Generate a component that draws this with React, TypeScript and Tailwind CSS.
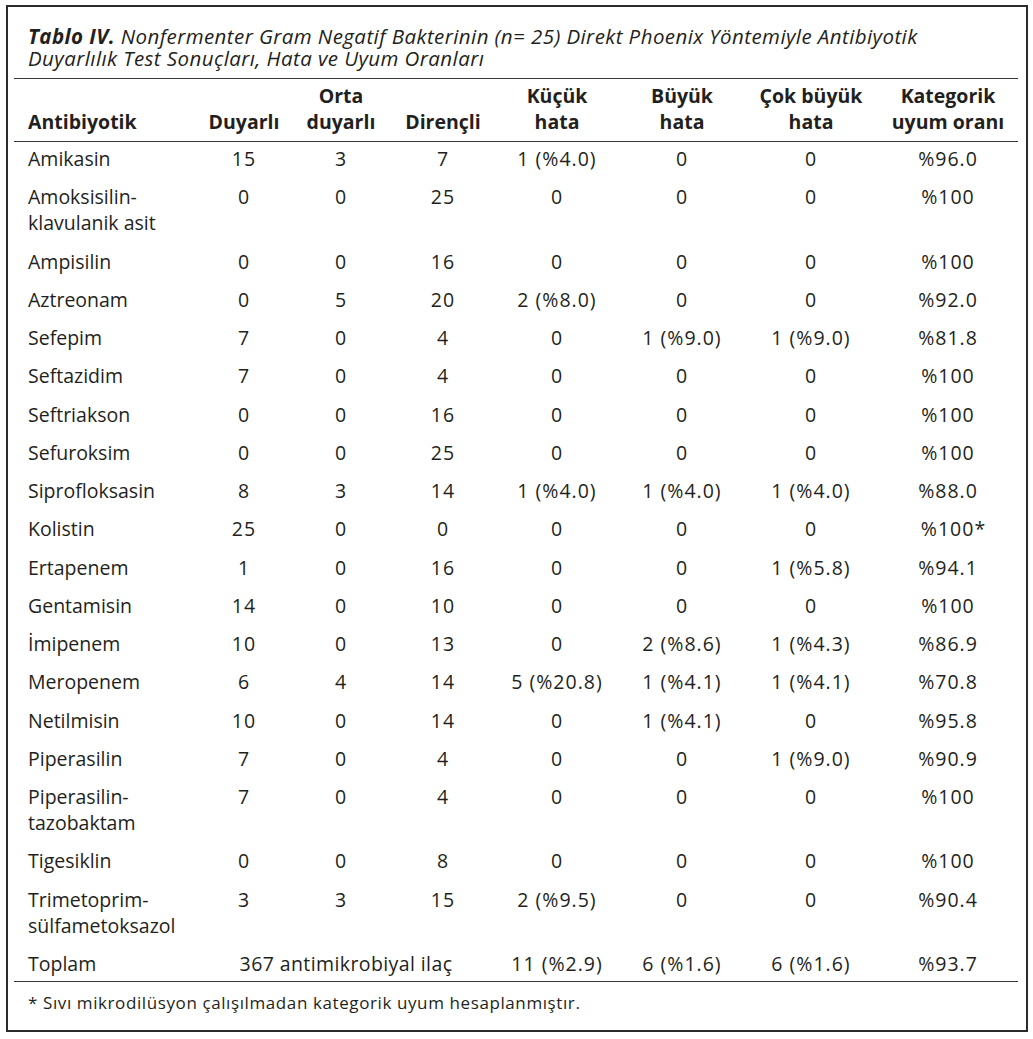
import React from "react";

type Row = {
  name: string[];
  v: string[];
  star?: boolean;
};

const rows: Row[] = [
  { name: ["Amikasin"], v: ["15", "3", "7", "1 (%4.0)", "0", "0", "%96.0"] },
  { name: ["Amoksisilin-", "klavulanik asit"], v: ["0", "0", "25", "0", "0", "0", "%100"] },
  { name: ["Ampisilin"], v: ["0", "0", "16", "0", "0", "0", "%100"] },
  { name: ["Aztreonam"], v: ["0", "5", "20", "2 (%8.0)", "0", "0", "%92.0"] },
  { name: ["Sefepim"], v: ["7", "0", "4", "0", "1 (%9.0)", "1 (%9.0)", "%81.8"] },
  { name: ["Seftazidim"], v: ["7", "0", "4", "0", "0", "0", "%100"] },
  { name: ["Seftriakson"], v: ["0", "0", "16", "0", "0", "0", "%100"] },
  { name: ["Sefuroksim"], v: ["0", "0", "25", "0", "0", "0", "%100"] },
  { name: ["Siprofloksasin"], v: ["8", "3", "14", "1 (%4.0)", "1 (%4.0)", "1 (%4.0)", "%88.0"] },
  { name: ["Kolistin"], v: ["25", "0", "0", "0", "0", "0", "%100"], star: true },
  { name: ["Ertapenem"], v: ["1", "0", "16", "0", "0", "1 (%5.8)", "%94.1"] },
  { name: ["Gentamisin"], v: ["14", "0", "10", "0", "0", "0", "%100"] },
  { name: ["İmipenem"], v: ["10", "0", "13", "0", "2 (%8.6)", "1 (%4.3)", "%86.9"] },
  { name: ["Meropenem"], v: ["6", "4", "14", "5 (%20.8)", "1 (%4.1)", "1 (%4.1)", "%70.8"] },
  { name: ["Netilmisin"], v: ["10", "0", "14", "0", "1 (%4.1)", "0", "%95.8"] },
  { name: ["Piperasilin"], v: ["7", "0", "4", "0", "0", "1 (%9.0)", "%90.9"] },
  { name: ["Piperasilin-", "tazobaktam"], v: ["7", "0", "4", "0", "0", "0", "%100"] },
  { name: ["Tigesiklin"], v: ["0", "0", "8", "0", "0", "0", "%100"] },
  { name: ["Trimetoprim-", "sülfametoksazol"], v: ["3", "3", "15", "2 (%9.5)", "0", "0", "%90.4"] },
];

const grid =
  "grid grid-cols-[186px_88px_106px_98px_130px_120px_138px_136px]";

export default function App() {
  return (
    <div
      className="min-h-screen bg-white pt-[5px] pl-[6px] text-[#231f20]"
      style={{ fontFamily: '"Open Sans", "Noto Sans", sans-serif' }}
    >
      <div className="w-[1022px] h-[1027px] border-2 border-[#2b2b2b] pl-[6px] pr-[8px]">
        {/* Title */}
        <div className="pt-[18px] pb-[9px] pl-[14px] border-b border-[#3a3a3a] text-[20.5px] leading-[22px] tracking-[0.42px] italic">
          <div>
            <span className="font-bold">Tablo IV.</span> Nonfermenter Gram Negatif Bakterinin (n= 25) Direkt Phoenix Yöntemiyle Antibiyotik
          </div>
          <div>Duyarlılık Test Sonuçları, Hata ve Uyum Oranları</div>
        </div>

        {/* Header */}
        <div className={`${grid} items-end pt-[4px] pb-[6px] border-b border-[#3a3a3a] text-[19.5px] leading-[26px] font-bold`}>
          <div className="pl-[14px]">Antibiyotik</div>
          <div className="text-center">Duyarlı</div>
          <div className="text-center">
            Orta
            <br />
            duyarlı
          </div>
          <div className="text-center">Dirençli</div>
          <div className="text-center">
            Küçük
            <br />
            hata
          </div>
          <div className="text-center">
            Büyük
            <br />
            hata
          </div>
          <div className="text-center">
            Çok büyük
            <br />
            hata
          </div>
          <div className="text-center">
            Kategorik
            <br />
            uyum oranı
          </div>
        </div>

        {/* Body */}
        <div className="-mt-[2px] text-[19.5px] leading-[26px]">
          {rows.map((r) => (
            <div key={r.name.join("")} className={`${grid} items-start py-[6.125px]`}>
              <div className="pl-[14px]">
                {r.name.map((n) => (
                  <div key={n}>{n}</div>
                ))}
              </div>
              {r.v.map((val, i) => (
                <div key={i} className="text-center whitespace-nowrap tracking-[1px]">
                  {i === 6 && r.star ? <span className="pl-[11px]">{val}*</span> : val}
                </div>
              ))}
            </div>
          ))}
          <div className={`${grid} items-start pt-[6.125px] pb-[4px] border-b border-[#3a3a3a]`}>
            <div className="pl-[14px]">Toplam</div>
            <div className="col-span-3 text-center tracking-[0.4px]">367 antimikrobiyal ilaç</div>
            <div className="text-center tracking-[1px]">11 (%2.9)</div>
            <div className="text-center tracking-[1px]">6 (%1.6)</div>
            <div className="text-center tracking-[1px]">6 (%1.6)</div>
            <div className="text-center tracking-[1px]">%93.7</div>
          </div>
        </div>

        {/* Footnote */}
        <div className="pl-[14px] pt-[10px] text-[17px] leading-[22px] tracking-[0.6px]">
          * Sıvı mikrodilüsyon çalışılmadan kategorik uyum hesaplanmıştır.
        </div>
      </div>
    </div>
  );
}
